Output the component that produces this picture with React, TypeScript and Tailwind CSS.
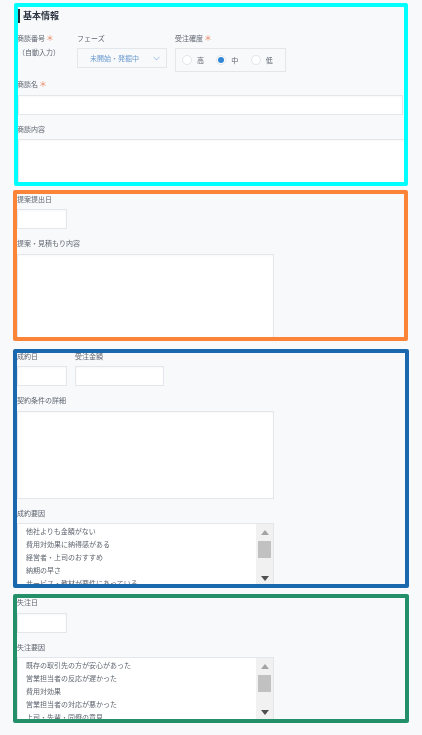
import type { ReactNode } from 'react';

const boxClass =
	'block border border-[#e3e6ea] bg-white shadow-[inset_0_1px_2px_rgba(0,0,0,0.03)] outline-none';

function Label({ children, required }: { children: ReactNode; required?: boolean }) {
	return (
		<div className="flex h-[10px] items-center whitespace-nowrap text-[7px] leading-[10px] text-[#5f6670] blur-[0.25px]">
			<span>{children}</span>
			{required && <span className="ml-[1px] text-[8px] leading-[10px] text-[#e98a66]">＊</span>}
		</div>
	);
}

function Radio({ label, checked }: { label: string; checked?: boolean }) {
	return (
		<label className="flex w-[37px] items-center gap-[5px] text-[7px] text-[#5f6670]">
			<span className="flex h-[10px] w-[10px] items-center justify-center rounded-full border border-[#e3e6ea] bg-white">
				{checked && <span className="h-[6px] w-[6px] rounded-full bg-[#2f86d6]" />}
			</span>
			<span className="blur-[0.25px]">{label}</span>
		</label>
	);
}

function ListBox({ items }: { items: string[] }) {
	return (
		<div className="mt-[5px] flex h-[65px] w-[257px] border border-[#e3e6ea] bg-white">
			<ul className="flex-1 overflow-hidden pl-[8px] pt-[1px] text-[7px] leading-[13px] text-[#5f6670] blur-[0.25px]">
				{items.map((item) => (
					<li key={item} className="h-[13px] whitespace-nowrap">
						{item}
					</li>
				))}
			</ul>
			<div className="flex w-[17px] flex-col bg-[#f1f1f1]">
				<div className="flex h-[17px] items-center justify-center">
					<svg width="8" height="5" viewBox="0 0 8 5">
						<polygon points="4,0 8,5 0,5" fill="#a3a3a3" />
					</svg>
				</div>
				<div className="mx-[2px] h-[17px] bg-[#c1c1c1]" />
				<div className="flex-1" />
				<div className="flex h-[17px] items-center justify-center">
					<svg width="8" height="5" viewBox="0 0 8 5">
						<polygon points="0,0 8,0 4,5" fill="#505050" />
					</svg>
				</div>
			</div>
		</div>
	);
}

export default function App() {
	return (
		<div
			className="h-[735px] overflow-hidden bg-[#f8f9fb] pt-[3px]"
			style={{ fontFamily: '"Noto Sans CJK JP", "Noto Sans", sans-serif' }}>
			{/* 基本情報 */}
			<section className="ml-[14px] h-[183px] w-[394px] overflow-hidden rounded-[2px] border-4 border-[#00ffff]">
				<h2 className="mt-[2px] flex h-[14px] items-center border-l-2 border-[#1f2d3a] pl-[3px] text-[9px] font-bold text-[#2b3440]">
					<span className="blur-[0.25px]">基本情報</span>
				</h2>
				<div className="mt-[10px] flex h-[39px]">
					<div className="ml-[-1px] w-[60px]">
						<Label required>商談番号</Label>
						<div className="ml-[1px] mt-[4px] text-[7px] leading-[10px] text-[#5f6670] blur-[0.25px]">（自動入力）</div>
					</div>
					<div className="w-[98px]">
						<Label>フェーズ</Label>
						<div className="mt-[5px] flex h-[20px] w-[90px] items-center justify-between border border-[#e3e6ea] bg-[#f8f9fb] pl-[12px] pr-[6px] text-[7px] text-[#6a9bd0]">
							<span className="blur-[0.25px]">未開始・発掘中</span>
							<svg width="7" height="5" viewBox="0 0 7 5" fill="none" stroke="#8fb3d9" strokeWidth="0.8">
								<path d="M0.5 0.8 L3.5 4 L6.5 0.8" />
							</svg>
						</div>
					</div>
					<div>
						<Label required>受注確度</Label>
						<div className="mt-[5px] flex h-[24px] w-[111px] items-center border border-[#e3e6ea] pl-[6px]">
							<Radio label="高" />
							<Radio label="中" checked />
							<Radio label="低" />
						</div>
					</div>
				</div>
				<div className="ml-[-1px] mt-[7px]">
					<Label required>商談名</Label>
				</div>
				<input className={`${boxClass} mt-[6px] h-[20px] w-[385px]`} />
				<div className="ml-[-1px] mt-[9px]">
					<Label>商談内容</Label>
				</div>
				<textarea className={`${boxClass} mt-[5px] h-[46px] w-[390px] resize-none`} />
			</section>

			{/* 提案 */}
			<section className="ml-[13px] mt-[4px] h-[151px] w-[395px] overflow-hidden rounded-[2px] border-4 border-[#fb8438]">
				<Label>提案提出日</Label>
				<input className={`${boxClass} mt-[5px] h-[20px] w-[50px]`} />
				<div className="mt-[9px]">
					<Label>提案・見積もり内容</Label>
				</div>
				<textarea className={`${boxClass} mt-[6px] h-[90px] w-[257px] resize-none`} />
			</section>

			{/* 成約 */}
			<section className="ml-[13px] mt-[8px] h-[239px] w-[396px] overflow-hidden rounded-[2px] border-4 border-[#1a69ae]">
				<div className="mt-[-2px] flex gap-[8px]">
					<div className="w-[50px]">
						<Label>成約日</Label>
						<input className={`${boxClass} mt-[5px] h-[20px] w-[50px]`} />
					</div>
					<div className="w-[89px]">
						<Label>受注金額</Label>
						<input className={`${boxClass} mt-[5px] h-[20px] w-[89px]`} />
					</div>
				</div>
				<div className="mt-[9px]">
					<Label>契約条件の詳細</Label>
				</div>
				<textarea className={`${boxClass} mt-[6px] h-[88px] w-[257px] resize-none`} />
				<div className="mt-[9px]">
					<Label>成約要因</Label>
				</div>
				<ListBox
					items={[
						'他社よりも金額がない',
						'費用対効果に納得感がある',
						'経営者・上司のおすすめ',
						'納期の早さ',
						'サービス・教材が要件にあっている',
					]}
				/>
			</section>

			{/* 失注 */}
			<section className="ml-[13px] mt-[6px] h-[129px] w-[396px] overflow-hidden rounded-[2px] border-4 border-[#239069]">
				<div className="mt-[-1px]">
					<Label>失注日</Label>
				</div>
				<input className={`${boxClass} mt-[6px] h-[20px] w-[50px]`} />
				<div className="mt-[9px]">
					<Label>失注要因</Label>
				</div>
				<ListBox
					items={[
						'既存の取引先の方が安心があった',
						'営業担当者の反応が遅かった',
						'費用対効果',
						'営業担当者の対応が悪かった',
						'上司・先輩・同僚の意見',
					]}
				/>
			</section>
		</div>
	);
}
